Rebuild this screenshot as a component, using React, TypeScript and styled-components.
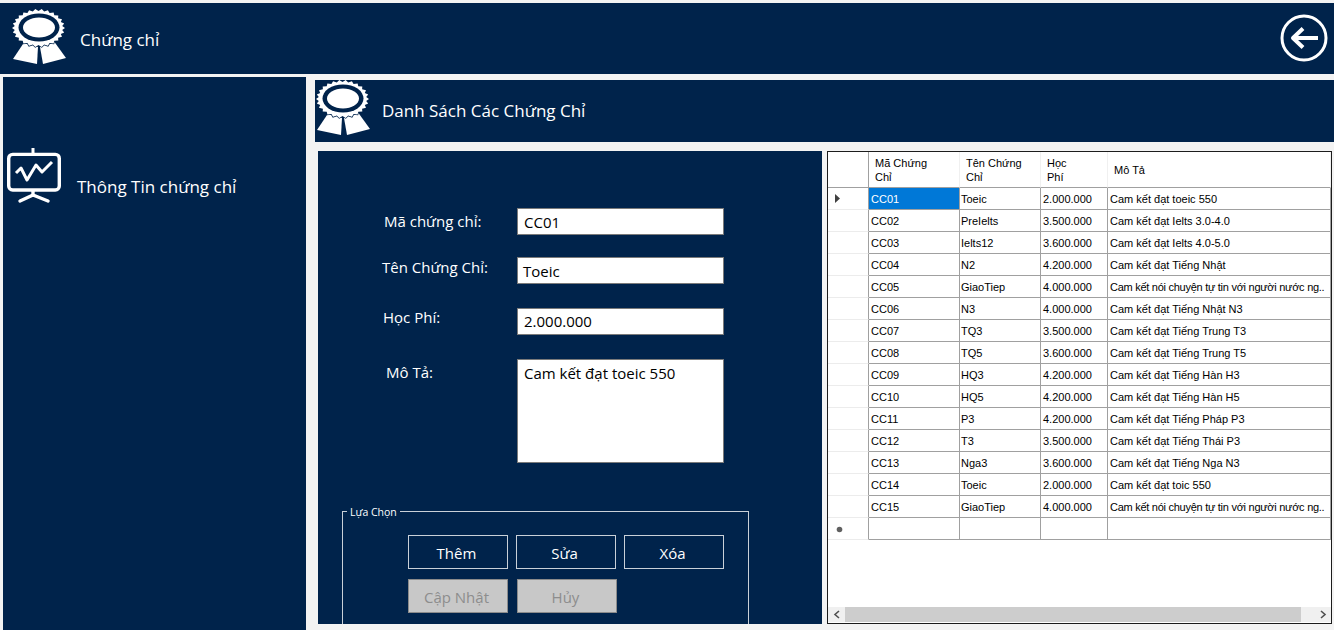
import React from "react";
import styled, { createGlobalStyle } from "styled-components";

const NAVY = "#00234b";
const UI_FONT = `"Open Sans", "Noto Sans", sans-serif`;

const Global = createGlobalStyle`
  html, body { margin: 0; padding: 0; background: #f3f3f3; overflow: hidden; }
  * { box-sizing: border-box; }
`;

const Page = styled.div`
  width: 1334px;
  height: 630px;
  padding-top: 3px;
  background: #f3f3f3;
  font-family: ${UI_FONT};
  overflow: hidden;
`;

const TopBar = styled.header`
  height: 71px;
  background: ${NAVY};
  display: flex;
  align-items: flex-start;
  padding: 6px 6px 0 12px;
`;

const BarTitle = styled.div`
  color: #fff;
  font-size: 17px;
  line-height: 22px;
  margin: 20px 0 0 14px;
  flex: 1;
`;

const Main = styled.div`
  display: flex;
  margin-top: 3px;
  padding-left: 3px;
`;

const Sidebar = styled.nav`
  width: 303px;
  height: 553px;
  background: ${NAVY};
  padding: 71px 0 0 4px;
  display: flex;
  align-items: flex-start;
`;

const SideLabel = styled.div`
  color: #fff;
  font-size: 17px;
  line-height: 22px;
  margin: 28px 0 0 14px;
`;

const Right = styled.div`
  width: 1019px;
  margin-left: 9px;
  padding-top: 3px;
`;

const SubBar = styled.div`
  height: 62px;
  background: ${NAVY};
  display: flex;
  align-items: flex-start;
  padding-left: 1px;
`;

const SubTitle = styled.div`
  color: #fff;
  font-size: 17px;
  line-height: 22px;
  margin: 20px 0 0 12px;
`;

const Content = styled.div`
  display: flex;
  gap: 5px;
  margin-top: 9px;
  padding-left: 3px;
`;

const FormPanel = styled.section`
  width: 504px;
  height: 473px;
  background: ${NAVY};
  padding-top: 57px;
  overflow: hidden;
`;

const FormRow = styled.div<{ $top: number }>`
  display: grid;
  grid-template-columns: 199px 207px;
  margin-top: ${(p) => p.$top}px;
`;

const FieldLabel = styled.div<{ $indent: number; $top: number }>`
  color: #fff;
  font-size: 15px;
  line-height: 20px;
  padding-left: ${(p) => p.$indent}px;
  margin-top: ${(p) => p.$top}px;
`;

const Field = styled.div<{ $height: number; $pad: number; $top: number }>`
  height: ${(p) => p.$height}px;
  background: #fff;
  border: 1px solid #7a7a7a;
  color: #000;
  font-size: 15px;
  line-height: 20px;
  padding: ${(p) => p.$top}px 0 0 ${(p) => p.$pad}px;
`;

const GroupBox = styled.div`
  position: relative;
  width: 407px;
  height: 160px;
  margin: 48px 0 0 24px;
  border: 1px solid #c9d0d8;
  padding: 23px 0 0 65px;
`;

const GroupLegend = styled.span`
  position: absolute;
  left: 4px;
  top: -7px;
  padding: 0 3px;
  background: ${NAVY};
  color: #fff;
  font-size: 10.5px;
  line-height: 14px;
`;

const ButtonRow = styled.div<{ $gap: number; $top: number }>`
  display: flex;
  gap: ${(p) => p.$gap}px;
  margin-top: ${(p) => p.$top}px;
`;

const ActionButton = styled.button<{ $off?: boolean }>`
  width: 100px;
  height: 34px;
  padding: 2px 3px 0 0;
  font-family: ${UI_FONT};
  font-size: 15px;
  color: ${(p) => (p.$off ? "#8d8d8d" : "#fff")};
  background: ${(p) => (p.$off ? "#c8c8c8" : NAVY)};
  border: 1px solid ${(p) => (p.$off ? "#8b8b8b" : "#c9d0d8")};
`;

const GridPanel = styled.section`
  width: 505px;
  height: 473px;
  background: #fff;
  border: 1px solid #1c1c1c;
  display: flex;
  flex-direction: column;
`;

const TableArea = styled.div`
  flex: 1;
  overflow: hidden;
`;

const Table = styled.table`
  width: 503px;
  table-layout: fixed;
  border-collapse: separate;
  border-spacing: 0;
  font-family: "Liberation Sans", Arial, sans-serif;
  font-size: 11px;
  color: #000;
`;

const HeadCell = styled.th<{ $edge?: boolean }>`
  height: 36px;
  padding: 0 6px;
  font-weight: 400;
  text-align: left;
  line-height: 14px;
  background: #fff;
  border-right: 1px solid ${(p) => (p.$edge ? "#a0a0a0" : "#f0f0f0")};
  border-bottom: 1px solid #a0a0a0;
`;

const HeadText = styled.div<{ $width: number }>`
  width: ${(p) => p.$width}px;
`;

const RowHead = styled.td`
  height: 22px;
  padding: 0;
  border-right: 1px solid #a0a0a0;
  border-bottom: 1px solid #ececec;
  vertical-align: middle;
`;

const Cell = styled.td<{ $selected?: boolean; $tight?: boolean; $pad?: number }>`
  height: 22px;
  padding: 0 0 0 ${(p) => p.$pad ?? 2}px;
  white-space: nowrap;
  overflow: hidden;
  letter-spacing: ${(p) => (p.$tight ? "-0.27px" : "0")};
  background: ${(p) => (p.$selected ? "#0078d7" : "#fff")};
  color: ${(p) => (p.$selected ? "#fff" : "#000")};
  border-right: 1px solid #a0a0a0;
  border-bottom: 1px solid #a0a0a0;
`;

const ScrollBar = styled.div`
  height: 15px;
  margin-bottom: 1px;
  background: #f0f0f0;
  display: flex;
  align-items: center;
`;

const ScrollButton = styled.div`
  width: 17px;
  height: 15px;
  display: flex;
  align-items: center;
  justify-content: center;
`;

const ScrollThumb = styled.div`
  width: 456px;
  height: 15px;
  background: #cdcdcd;
`;

const ScrollGap = styled.div`
  flex: 1;
`;

const ArrowMark = styled.svg`
  display: block;
  margin-left: 6px;
`;

const NewRowMark = styled.svg`
  display: block;
  margin: 1px 0 0 8px;
`;

const IconSvg = styled.svg`
  flex: none;
`;

const BackSvg = styled.svg`
  flex: none;
  margin-top: 5px;
`;

function Rosette() {
  const pts: string[] = [];
  const teeth = 26;
  for (let i = 0; i < teeth * 2; i++) {
    const a = (i * Math.PI) / teeth;
    const k = i % 2 === 0 ? 1 : 0.9;
    pts.push(`${(26.5 + 26.5 * k * Math.cos(a)).toFixed(1)},${(19 + 19 * k * Math.sin(a)).toFixed(1)}`);
  }
  return (
    <IconSvg width="54" height="56" viewBox="0 0 54 56">
      <path d="M13 32 L1 50 L25 55 L26 38 Z" fill="#fff" />
      <path d="M28 38 L31 55 L54 49 L41 31 Z" fill="#fff" />
      <polygon points={pts.join(" ")} fill="#fff" stroke={NAVY} strokeWidth="1.4" paintOrder="stroke" />
      <ellipse cx="27" cy="18.5" rx="20.5" ry="14" fill={NAVY} />
      <ellipse cx="27" cy="18.5" rx="16" ry="10" fill="#fff" />
    </IconSvg>
  );
}

function ChartBoard() {
  return (
    <IconSvg width="56" height="56" viewBox="0 0 56 56">
      <rect x="24.5" y="0" width="3" height="8" fill="#fff" />
      <rect x="1.7" y="6.4" width="50.6" height="35.6" rx="4" fill="none" stroke="#fff" strokeWidth="3.4" />
      <path d="M9 25 L14 20 L20 32 L29 17 L35 24 L45 14" fill="none" stroke="#fff" strokeWidth="3" strokeLinejoin="round" />
      <path d="M26 43 V47 M26 47 L13 53 M26 47 L41 53" fill="none" stroke="#fff" strokeWidth="3.4" strokeLinecap="round" />
    </IconSvg>
  );
}

function BackCircle() {
  return (
    <BackSvg width="48" height="48" viewBox="0 0 48 48">
      <circle cx="24" cy="24" r="22" fill="none" stroke="#fff" strokeWidth="3" />
      <path d="M13 24 H38 M23 14.5 L13 24 L23 33.5" fill="none" stroke="#fff" strokeWidth="4" strokeLinejoin="round" />
    </BackSvg>
  );
}

function Chevron({ left }: { left?: boolean }) {
  return (
    <svg width="8" height="9" viewBox="0 0 8 9">
      <path d={left ? "M6 1 L2 4.5 L6 8" : "M2 1 L6 4.5 L2 8"} fill="none" stroke="#505050" strokeWidth="1.6" />
    </svg>
  );
}

const LONG = "Cam kết nói chuyện tự tin với người nước ng..";
const rows: [string, string, string, string][] = [
  ["CC01", "Toeic", "2.000.000", "Cam kết đạt toeic 550"],
  ["CC02", "PreIelts", "3.500.000", "Cam kết đạt Ielts 3.0-4.0"],
  ["CC03", "Ielts12", "3.600.000", "Cam kết đạt Ielts 4.0-5.0"],
  ["CC04", "N2", "4.200.000", "Cam kết đạt Tiếng Nhật"],
  ["CC05", "GiaoTiep", "4.000.000", LONG],
  ["CC06", "N3", "4.000.000", "Cam kết đạt Tiếng Nhật N3"],
  ["CC07", "TQ3", "3.500.000", "Cam kết đạt Tiếng Trung T3"],
  ["CC08", "TQ5", "3.600.000", "Cam kết đạt Tiếng Trung T5"],
  ["CC09", "HQ3", "4.200.000", "Cam kết đạt Tiếng Hàn H3"],
  ["CC10", "HQ5", "4.200.000", "Cam kết đạt Tiếng Hàn H5"],
  ["CC11", "P3", "4.200.000", "Cam kết đạt Tiếng Pháp P3"],
  ["CC12", "T3", "3.500.000", "Cam kết đạt Tiếng Thái P3"],
  ["CC13", "Nga3", "3.600.000", "Cam kết đạt Tiếng Nga N3"],
  ["CC14", "Toeic", "2.000.000", "Cam kết đạt toic 550"],
  ["CC15", "GiaoTiep", "4.000.000", LONG],
];

export default function App() {
  return (
    <Page>
      <Global />
      <TopBar>
        <Rosette />
        <BarTitle>Chứng chỉ</BarTitle>
        <BackCircle />
      </TopBar>
      <Main>
        <Sidebar>
          <ChartBoard />
          <SideLabel>Thông Tin chứng chỉ</SideLabel>
        </Sidebar>
        <Right>
          <SubBar>
            <Rosette />
            <SubTitle>Danh Sách Các Chứng Chỉ</SubTitle>
          </SubBar>
          <Content>
            <FormPanel>
              <FormRow $top={0}>
                <FieldLabel $indent={66} $top={3}>Mã chứng chỉ:</FieldLabel>
                <Field $height={27} $pad={6} $top={3}>CC01</Field>
              </FormRow>
              <FormRow $top={22}>
                <FieldLabel $indent={64} $top={0}>Tên Chứng Chỉ:</FieldLabel>
                <Field $height={27} $pad={5} $top={3}>Toeic</Field>
              </FormRow>
              <FormRow $top={24}>
                <FieldLabel $indent={65} $top={-1}>Học Phí:</FieldLabel>
                <Field $height={27} $pad={6} $top={2}>2.000.000</Field>
              </FormRow>
              <FormRow $top={24}>
                <FieldLabel $indent={68} $top={3}>Mô Tả:</FieldLabel>
                <Field $height={104} $pad={6} $top={3}>Cam kết đạt toeic 550</Field>
              </FormRow>
              <GroupBox>
                <GroupLegend>Lựa Chọn</GroupLegend>
                <ButtonRow $gap={8} $top={0}>
                  <ActionButton>Thêm</ActionButton>
                  <ActionButton>Sửa</ActionButton>
                  <ActionButton>Xóa</ActionButton>
                </ButtonRow>
                <ButtonRow $gap={9} $top={10}>
                  <ActionButton $off>Cập Nhật</ActionButton>
                  <ActionButton $off>Hủy</ActionButton>
                </ButtonRow>
              </GroupBox>
            </FormPanel>
            <GridPanel>
              <TableArea>
                <Table>
                  <colgroup>
                    <col width="41" />
                    <col width="91" />
                    <col width="81" />
                    <col width="67" />
                    <col />
                  </colgroup>
                  <thead>
                    <tr>
                      <HeadCell $edge />
                      <HeadCell><HeadText $width={70}>Mã Chứng Chỉ</HeadText></HeadCell>
                      <HeadCell><HeadText $width={66}>Tên Chứng Chỉ</HeadText></HeadCell>
                      <HeadCell><HeadText $width={30}>Học Phí</HeadText></HeadCell>
                      <HeadCell>Mô Tả</HeadCell>
                    </tr>
                  </thead>
                  <tbody>
                    {rows.map((r, i) => (
                      <tr key={r[0]}>
                        <RowHead>
                          {i === 0 && (
                            <ArrowMark width="7" height="9" viewBox="0 0 7 9">
                              <path d="M1 0 L6 4.5 L1 9 Z" fill="#404040" />
                            </ArrowMark>
                          )}
                        </RowHead>
                        <Cell $selected={i === 0}>{r[0]}</Cell>
                        <Cell $pad={1}>{r[1]}</Cell>
                        <Cell>{r[2]}</Cell>
                        <Cell $tight={r[3] === LONG}>{r[3]}</Cell>
                      </tr>
                    ))}
                    <tr>
                      <RowHead>
                        <NewRowMark width="7" height="7" viewBox="0 0 7 7">
                          <circle cx="3.5" cy="3.5" r="2.8" fill="#606060" />
                        </NewRowMark>
                      </RowHead>
                      <Cell />
                      <Cell />
                      <Cell />
                      <Cell />
                    </tr>
                  </tbody>
                </Table>
              </TableArea>
              <ScrollBar>
                <ScrollButton><Chevron left /></ScrollButton>
                <ScrollThumb />
                <ScrollGap />
                <ScrollButton><Chevron /></ScrollButton>
              </ScrollBar>
            </GridPanel>
          </Content>
        </Right>
      </Main>
    </Page>
  );
}
